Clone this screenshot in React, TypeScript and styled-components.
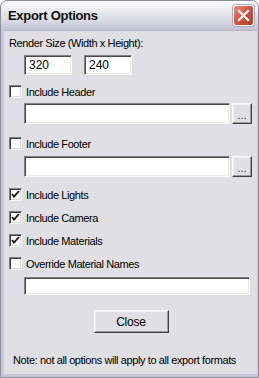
import React from 'react';
import styled, { createGlobalStyle } from 'styled-components';

const GlobalStyle = createGlobalStyle`
  html, body {
    margin: 0;
    padding: 0;
    background: #ffffff;
  }
  body {
    font-family: "Liberation Sans", Arial, sans-serif;
    font-size: 11px;
    letter-spacing: -0.4px;
    color: #000;
  }
`;

const Window = styled.div`
  width: 259px;
  height: 378px;
  box-sizing: border-box;
  display: flex;
  flex-direction: column;
  border: 1px solid #8d8e9c;
  border-radius: 7px 7px 0 0;
  overflow: hidden;
  background: #c7c7d4;
`;

const TitleBar = styled.div`
  height: 29px;
  flex-shrink: 0;
  display: flex;
  align-items: center;
  justify-content: space-between;
  padding: 0 4px 0 7px;
  background: linear-gradient(#fbfbfd 0%, #ececf2 30%, #dadae4 65%, #c2c2d0 100%);
`;

const Title = styled.span`
  font-family: "Liberation Sans", Arial, sans-serif;
  font-weight: bold;
  font-size: 13px;
  letter-spacing: -0.3px;
  color: #101010;
`;

const CloseBox = styled.div`
  width: 21px;
  height: 21px;
  box-sizing: border-box;
  border: 1px solid #fff;
  border-radius: 3px;
  background: linear-gradient(135deg, #e59080 0%, #cc5a46 45%, #b23a28 100%);
  display: flex;
  align-items: center;
  justify-content: center;
  box-shadow: 0 0 0 1px #a8a8b8;
`;

const Frame = styled.div`
  flex: 1;
  display: flex;
  padding: 0 3px 3px 3px;
`;

const Client = styled.div`
  flex: 1;
  display: flex;
  flex-direction: column;
  background: #e0dfe3;
  padding: 0 5px;
  border-top: 1px solid #b4b4c4;
`;

const Label = styled.div<{ $top: number }>`
  margin-top: ${(p) => p.$top}px;
  height: 13px;
  line-height: 13px;
  white-space: nowrap;
`;

const SizeRow = styled.div`
  margin-top: 5px;
  display: flex;
  gap: 12px;
  padding-left: 15px;
`;

const TextBox = styled.div<{ $w: number; $h?: number }>`
  width: ${(p) => p.$w}px;
  height: ${(p) => p.$h ?? 20}px;
  box-sizing: border-box;
  background: #fff;
  border: 1px solid;
  border-color: #808080 #fbfbf8 #fbfbf8 #808080;
  box-shadow: inset 1px 1px #4a4a4a, inset -1px -1px #ecebe4;
  padding: 3px 0 0 4px;
  line-height: 13px;
  font-size: 12px;
  letter-spacing: 0;
`;

const CheckRow = styled.label<{ $top: number }>`
  margin-top: ${(p) => p.$top}px;
  display: flex;
  align-items: center;
  height: 13px;
  gap: 4px;
  white-space: nowrap;
`;

const Box = styled.span`
  width: 13px;
  height: 13px;
  box-sizing: border-box;
  border: 1px solid;
  border-color: #7c7c84 #f4f4f4 #f4f4f4 #7c7c84;
  box-shadow: inset 1px 1px #3f3f3f, inset -1px -1px #dcdcd8;
  background: #fff;
  display: flex;
  align-items: center;
  justify-content: center;
  flex-shrink: 0;
`;

const FileRow = styled.div<{ $top: number }>`
  margin-top: ${(p) => p.$top}px;
  display: flex;
  gap: 2px;
  padding-left: 15px;
`;

const Button = styled.div<{ $w: number; $h: number }>`
  width: ${(p) => p.$w}px;
  height: ${(p) => p.$h}px;
  box-sizing: border-box;
  background: #e0dfe3;
  border: 1px solid;
  border-color: #fbfbfb #404040 #404040 #fbfbfb;
  box-shadow: inset -1px -1px #9d9da1, inset 1px 1px #f1f1f1;
  display: flex;
  align-items: center;
  justify-content: center;
  font-size: 12px;
  letter-spacing: -0.2px;
`;

const Dots = styled.span`
  color: #2a2a6a;
  font-size: 11px;
  padding-top: 3px;
  letter-spacing: 0;
`;

const CenterRow = styled.div`
  margin-top: 15px;
  display: flex;
  justify-content: center;
  padding-left: 1px;
`;

const Note = styled.div`
  margin-top: 21px;
  padding-left: 4px;
  height: 13px;
  line-height: 13px;
  white-space: nowrap;
`;

const Check = ({ on }: { on: boolean }) => (
  <Box>
    {on && (
      <svg width="9" height="9" viewBox="0 0 9 9">
        <path d="M1 4 L3 6.5 L8 1" fill="none" stroke="#111" strokeWidth="1.8" />
      </svg>
    )}
  </Box>
);

const Option = ({ top, on, children }: { top: number; on: boolean; children: React.ReactNode }) => (
  <CheckRow $top={top}>
    <Check on={on} />
    <span>{children}</span>
  </CheckRow>
);

const App = () => {
  return (
    <>
      <GlobalStyle />
      <Window>
        <TitleBar>
          <Title>Export Options</Title>
          <CloseBox>
            <svg width="13" height="13" viewBox="0 0 13 13">
              <path d="M2 2 L11 11 M11 2 L2 11" stroke="#fff" strokeWidth="2.2" strokeLinecap="square" />
            </svg>
          </CloseBox>
        </TitleBar>
        <Frame>
          <Client>
            <Label $top={6}>Render Size (Width x Height):</Label>
            <SizeRow>
              <TextBox $w={48}>320</TextBox>
              <TextBox $w={48}>240</TextBox>
            </SizeRow>
            <Option top={10} on={false}>Include Header</Option>
            <FileRow $top={5}>
              <TextBox $w={206} $h={21} />
              <Button $w={20} $h={21}>
                <Dots>...</Dots>
              </Button>
            </FileRow>
            <Option top={13} on={false}>Include Footer</Option>
            <FileRow $top={6}>
              <TextBox $w={206} $h={21} />
              <Button $w={20} $h={21}>
                <Dots>...</Dots>
              </Button>
            </FileRow>
            <Option top={11} on={true}>Include Lights</Option>
            <Option top={10} on={true}>Include Camera</Option>
            <Option top={10} on={true}>Include Materials</Option>
            <Option top={10} on={false}>Override Material Names</Option>
            <FileRow $top={7}>
              <TextBox $w={226} $h={18} />
            </FileRow>
            <CenterRow>
              <Button $w={75} $h={23}>Close</Button>
            </CenterRow>
            <Note>Note: not all options will apply to all export formats</Note>
          </Client>
        </Frame>
      </Window>
    </>
  );
};

export default App;
